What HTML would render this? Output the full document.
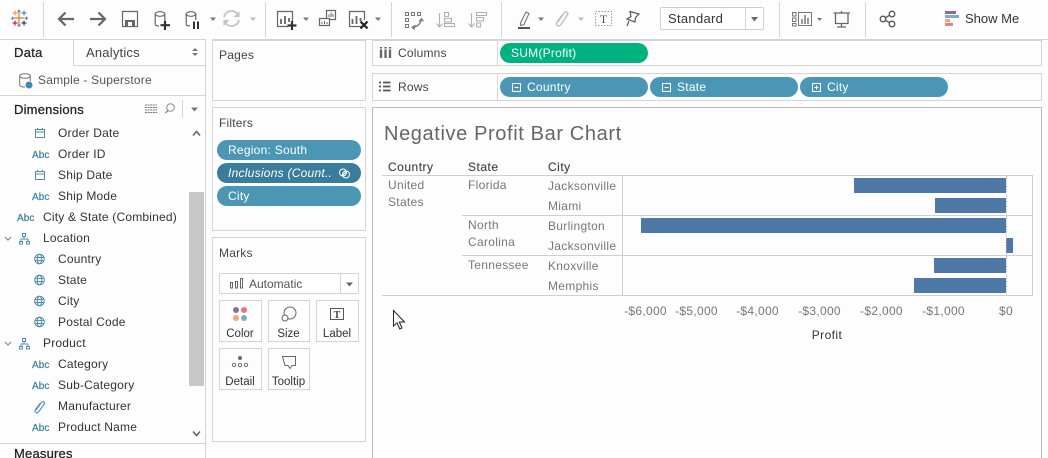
<!DOCTYPE html>
<html><head><meta charset="utf-8">
<style>
html,body{margin:0;padding:0;background:#fdfdfd;width:1048px;height:458px;overflow:hidden}
svg{display:block;font-family:"Liberation Sans",sans-serif;font-size:12px}
.l{fill:#333;letter-spacing:.2px}
.g{fill:#777;letter-spacing:.3px}
.h{fill:#444;letter-spacing:.5px;stroke:#444;stroke-width:.15px}
.w{fill:#fff;letter-spacing:.25px;font-size:12px}
.a{fill:#3b7f9b;font-size:10px;letter-spacing:.1px;stroke:#3b7f9b;stroke-width:.2px}
.i{fill:none;stroke:#666;stroke-width:1.2}
.b{fill:none;stroke:#d4d4d4;stroke-width:1}
.c{fill:none;stroke:#4f8fab;stroke-width:1}
.s{fill:none;stroke:#aaa;stroke-width:1.2}
.ar{fill:#777}
</style></head><body>
<svg width="1048" height="458" viewBox="0 0 1048 458" xmlns="http://www.w3.org/2000/svg">
<rect width="1048" height="458" fill="#fdfdfd"/>

<!-- toolbar separators -->
<g stroke="#d4d4d4" stroke-width="1">
<path d="M43.5 2V37M265.5 2V37M391.5 2V37M501.5 2V37M779.5 2V37M865.5 2V37"/>
<path d="M0 39.5H206M212 39.5H1048"/>
</g>

<!-- logo -->
<g fill="none" stroke-width="1.2">
<path d="M19 12V24M13.5 18H24.5" stroke="#e8762c"/>
<path d="M15 10.500V15.500M12.500 13H17.500" stroke="#e8a33d"/>
<path d="M24 10.500V15.500M21.500 13H26.500" stroke="#5b879b"/>
<path d="M15 20.500V25.500M12.500 23H17.500" stroke="#c72035"/>
<path d="M24 20.500V25.500M21.500 23H26.500" stroke="#1f447a"/>
<path d="M19 9.500V13M17.300 11.200H20.700" stroke="#5b879b"/>
<path d="M19 23.500V27M17.300 25.200H20.700" stroke="#7c6fa5"/>
<path d="M12.500 16.500V20M10.800 18.200H14.200" stroke="#5b9bb5"/>
<path d="M26.500 16.500V20M24.800 18.200H28.200" stroke="#5b879b"/>
</g>

<!-- back / forward -->
<path d="M59 19H74M65.500 12.500L59 19L65.500 25.500" fill="none" stroke="#666" stroke-width="2.200"/>
<path d="M90 19H105M98.500 12.500L105 19L98.500 25.500" fill="none" stroke="#666" stroke-width="2.200"/>
<!-- save -->
<path d="M122.500 11.500H137.500V26.500H122.500Z" class="i"/>
<rect x="125" y="20" width="10" height="6" fill="#666"/><rect x="128" y="22" width="4" height="4" fill="#fdfdfd"/>
<!-- new data source -->
<ellipse cx="160" cy="14" rx="4.800" ry="2.300" class="i"/>
<path d="M155.200 14V24C155.200 25.500 157 26 159 26M164.800 14V20" class="i"/>
<path d="M165 20.500V30M160.500 25.200H170" stroke="#333" stroke-width="2.200" fill="none"/>
<!-- pause -->
<ellipse cx="191" cy="14" rx="4.800" ry="2.300" class="i"/>
<path d="M186.200 14V24C186.200 25.500 188 26 190 26M195.800 14V20" class="i"/>
<path d="M194 21.500V29M198 21.500V29" stroke="#333" stroke-width="2" fill="none"/>
<path d="M210 17.500H216L213 21Z" class="ar"/>
<!-- refresh -->
<path d="M224 17C225 13 228 11 231.500 11C234 11 236 12 237.500 14M239 20C238 24 235 26 231.500 26C229 26 227 25 225.500 23" fill="none" stroke="#c4c4c4" stroke-width="1.800"/>
<path d="M239.500 11V17H233.500ZM223.500 26V20H229.500Z" fill="#c4c4c4"/>
<path d="M250 17.500H256L253 21Z" fill="#bbb"/>
<!-- new worksheet -->
<path d="M288 26.500H277.500V11.500H292.500V21" class="i"/>
<path d="M281 19V24M285 16V24M289 18V22" stroke="#666" stroke-width="1.800" fill="none"/>
<path d="M292 21V30M287.500 25.500H296.500" stroke="#333" stroke-width="2.200" fill="none"/>
<path d="M303 17.500H309L306 21Z" class="ar"/>
<!-- duplicate -->
<path d="M326.500 10.500H335.500V19.500H326.500Z" class="i"/>
<path d="M319.500 18.500H329.500V25.500H319.500Z" class="i" style="fill:#fdfdfd"/>
<path d="M329 17V14.500M331 17V12.500M333 17V14M322 24V22M324.500 24V21M327 24V22" stroke="#666" stroke-width="1" fill="none"/>
<!-- clear -->
<path d="M362 26.500H349.500V11.500H364.500V20" class="i"/>
<path d="M352.500 19V24M356.500 16V24M360.500 18V21" stroke="#666" stroke-width="1.800" fill="none"/>
<path d="M360.500 21.500L367.500 28.500M367.500 21.500L360.500 28.500" stroke="#222" stroke-width="2.200" fill="none"/>
<path d="M375 17.500H381L378 21Z" class="ar"/>
<!-- swap -->
<g stroke="#777" fill="none" stroke-width="1">
<path d="M405.500 12.500h3v3h-3zM411.500 12.500h3v3h-3zM417.500 12.500h3v3h-3zM405.500 18.500h3v3h-3zM405.500 24.500h3v3h-3z"/>
<path d="M421.500 19C421 23 418 26.500 413 27.500" stroke-width="1.300"/>
<path d="M419 21.500L421.500 18.500L423.500 21.500M415.500 25L412 27.500L415 29.500" stroke-width="1.100"/>
</g>
<!-- sort asc/desc -->
<g stroke="#b0b0b0" fill="none" stroke-width="1.100">
<path d="M439.500 13V27M436.500 23.500L439.500 27L442.500 23.500"/>
<path d="M444.500 12.500h4v4h-4zM444.500 18.500h7v3.500h-7zM444.500 23.500h10v3h-10z"/>
<path d="M471.500 13V27M468.500 23.500L471.500 27L474.500 23.500"/>
<path d="M476.500 12.500h10v3h-10zM476.500 17.500h7v3.500h-7zM476.500 23h4v4h-4z"/>
</g>
<!-- highlight -->
<path d="M520.500 23L526 12L529 13.500L524 24.500L520.500 25.500Z" fill="none" stroke="#777" stroke-width="1.100"/>
<rect x="518" y="27" width="12" height="2" fill="#555"/>
<path d="M538 17.500H544L541 21Z" class="ar"/>
<!-- clip -->
<path d="M558 22L564 13C566 10.500 569 12.500 567.500 15L560.500 25C558.500 27.500 555 25 557 22L562.500 14.500" fill="none" stroke="#bdbdbd" stroke-width="1.300"/>
<path d="M578 17.500H584L581 21Z" fill="#bbb"/>
<!-- T -->
<rect x="595.500" y="11.500" width="16" height="14" fill="none" stroke="#999" stroke-dasharray="1.500 1.500"/>
<text x="603.500" y="23" text-anchor="middle" font-family="Liberation Serif" font-size="12" fill="#555">T</text>
<!-- pin -->
<path d="M630 11.500L639 14L635.500 17.500L635 22L627 19L631 16.500ZM629 21L627 26" fill="none" stroke="#555" stroke-width="1.200"/>

<!-- Standard -->
<rect x="660.500" y="7.500" width="103" height="22" rx="1.500" fill="#fff" stroke="#d0d0d0"/>
<path d="M745.500 8V29" stroke="#d4d4d4"/>
<path d="M751 17H758L754.500 21.500Z" fill="#666"/>
<text x="668" y="23" font-size="13" fill="#333" letter-spacing=".3">Standard</text>

<!-- fit/show -->
<g fill="none" stroke="#777" stroke-width="1">
<path d="M792.500 12.500h3.500v3.500h-3.500zM792.500 18h3.500v3.500h-3.500zM792.500 23.500h3.500v2.500h-3.500z"/>
<path d="M798.500 12.500H811.500V25.500H798.500Z"/>
<path d="M802 24V19M805 24V15M808 24V18" stroke-width="1.500"/>
</g>
<path d="M817 18H822L819.500 21Z" class="ar"/>
<!-- presentation -->
<path d="M833.500 13H850M835.500 13V23.500H848V13M841.500 23.500V27M837 27H846M841.500 11V13" fill="none" stroke="#666" stroke-width="1.300"/>
<!-- share -->
<g fill="none" stroke="#555" stroke-width="1.300">
<circle cx="892" cy="14" r="2.800"/><circle cx="883" cy="19" r="2.800"/><circle cx="892" cy="24" r="2.800"/>
<path d="M885.500 17.700L889.500 15.300M885.500 20.300L889.500 22.700"/>
</g>
<!-- Show me -->
<rect x="945" y="11" width="11" height="3" fill="#8a6d9b"/>
<rect x="945" y="15" width="14" height="3" fill="#7eaccd"/>
<rect x="945" y="19" width="5" height="3" fill="#f0a675"/>
<rect x="945" y="23" width="8" height="3" fill="#f07c86"/>
<text x="965" y="23" font-size="13" fill="#333">Show Me</text>

<!-- left pane -->
<path d="M205.500 40V458" stroke="#d4d4d4"/>
<path d="M73.500 40V65.500H205" class="b"/>
<text x="14" y="57" font-size="13" fill="#222" stroke="#222" stroke-width=".25" letter-spacing=".3">Data</text>
<text x="86" y="57" font-size="13" fill="#444" letter-spacing=".2">Analytics</text>
<path d="M192 51L195 48L198 51ZM192 53L195 56L198 53Z" fill="#777"/>
<ellipse cx="25" cy="76" rx="5.300" ry="2.300" fill="none" stroke="#777"/>
<path d="M19.700 76V85C19.700 86.500 22 87 25 87M30.300 76V81" fill="none" stroke="#777"/>
<circle cx="29" cy="85" r="3.500" fill="#3d8bb0"/>
<text x="38" y="84" class="l" style="fill:#555">Sample - Superstore</text>
<path d="M0 95.500H205" class="b"/>
<text x="14" y="114" font-size="13" fill="#222" stroke="#222" stroke-width=".25" letter-spacing=".2">Dimensions</text>
<path d="M145 105H157M145 107.500H157M145 110H157M145 112.500H157" stroke="#777" stroke-dasharray="2 .6"/>
<circle cx="170.500" cy="107.500" r="3.800" fill="none" stroke="#888"/><path d="M168 110.500L165.500 113" stroke="#888" stroke-width="1.300"/>
<path d="M182.500 100V118" stroke="#d4d4d4"/>
<path d="M191 107.500H198L194.500 111.500Z" fill="#777"/>
<!-- scrollbar -->
<rect x="189" y="192" width="15" height="194" fill="#c8c8c8"/>
<path d="M193 135.500L196.500 131.500L200 135.500" fill="none" stroke="#666" stroke-width="1.600"/>
<path d="M193 431.500L196.500 435.500L200 431.500" fill="none" stroke="#666" stroke-width="1.600"/>

<!-- list -->
<g class="l">
<text x="58" y="137">Order Date</text>
<text x="58" y="158">Order ID</text>
<text x="58" y="179">Ship Date</text>
<text x="58" y="200">Ship Mode</text>
<text x="43" y="221">City &amp; State (Combined)</text>
<text x="43" y="242">Location</text>
<text x="58" y="263">Country</text>
<text x="58" y="284">State</text>
<text x="58" y="305">City</text>
<text x="58" y="326">Postal Code</text>
<text x="43" y="347">Product</text>
<text x="58" y="368">Category</text>
<text x="58" y="389">Sub-Category</text>
<text x="58" y="410">Manufacturer</text>
<text x="58" y="431">Product Name</text>
</g>
<g class="a">
<text x="32" y="158">Abc</text><text x="32" y="200">Abc</text><text x="17" y="221">Abc</text>
<text x="32" y="368">Abc</text><text x="32" y="389">Abc</text><text x="32" y="431">Abc</text>
</g>
<!-- date icons -->
<g class="c">
<path d="M35.500 129.500H44.500V137.500H35.500ZM35.500 132H44.500M37.500 128V130M42.500 128V130"/>
<path d="M35.500 171.500H44.500V179.500H35.500ZM35.500 174H44.500M37.500 170V172M42.500 170V172"/>
</g>
<!-- globes -->
<g class="c">
<circle cx="39.500" cy="259" r="4.800"/><ellipse cx="39.500" cy="259" rx="2.200" ry="4.800"/><path d="M34.700 257.500H44.300M34.700 260.500H44.300"/>
<circle cx="39.500" cy="280" r="4.800"/><ellipse cx="39.500" cy="280" rx="2.200" ry="4.800"/><path d="M34.700 278.500H44.300M34.700 281.500H44.300"/>
<circle cx="39.500" cy="301" r="4.800"/><ellipse cx="39.500" cy="301" rx="2.200" ry="4.800"/><path d="M34.700 299.500H44.300M34.700 302.500H44.300"/>
<circle cx="39.500" cy="322" r="4.800"/><ellipse cx="39.500" cy="322" rx="2.200" ry="4.800"/><path d="M34.700 320.500H44.300M34.700 323.500H44.300"/>
</g>
<!-- hierarchy -->
<g class="c">
<path d="M22.500 233.500h3v3h-3zM19.500 241.500h3v2.500h-3zM26.500 241.500h3v2.500h-3zM24 236.500V239M21 241.500V239H28V241.500"/>
<path d="M22.500 338.500h3v3h-3zM19.500 346.500h3v2.500h-3zM26.500 346.500h3v2.500h-3zM24 341.500V344M21 346.500V344H28V346.500"/>
</g>
<path d="M5 237L8 240L11 237M5 342L8 345L11 342" fill="none" stroke="#888" stroke-width="1.200"/>
<!-- clip -->
<path d="M36 410L41.500 402.500C43.500 400.500 45.500 402.500 44 404.500L38.500 412C36.500 414 34 412 35.500 409.500L40 403.500" fill="none" stroke="#4f8fab" stroke-width="1.100"/>
<path d="M0 443.500H205" class="b"/>
<text x="14" y="458" font-size="13" fill="#222" stroke="#222" stroke-width=".25" letter-spacing=".2">Measures</text>

<!-- middle cards -->
<rect x="212.500" y="40.500" width="153" height="60" class="b"/>
<rect x="212.500" y="107.500" width="153" height="123" class="b"/>
<rect x="212.500" y="237.500" width="153" height="204" class="b"/>
<text x="219" y="59" class="l" style="fill:#444">Pages</text>
<text x="219" y="127" class="l" style="fill:#444">Filters</text>
<text x="219" y="257" class="l" style="fill:#444">Marks</text>

<rect x="217" y="140" width="144" height="20" rx="10" fill="#4b96b4"/>
<rect x="217" y="163" width="144" height="20" rx="10" fill="#3a7c9b"/>
<rect x="217" y="186" width="144" height="20" rx="10" fill="#4b96b4"/>
<text x="228" y="154" class="w">Region: South</text>
<text x="228" y="177" class="w" font-style="italic">Inclusions (Count..</text>
<g fill="none" stroke="#fff" stroke-width="1"><circle cx="343" cy="172.500" r="3.500"/><circle cx="346" cy="174.500" r="3.500"/><path d="M342 176L347 171"/></g>
<text x="228" y="200" class="w">City</text>

<!-- marks -->
<rect x="219.500" y="273.500" width="139" height="20" rx="1" fill="#fff" stroke="#d4d4d4"/>
<path d="M340.500 274V293" stroke="#d4d4d4"/>
<path d="M346 282.500H353L349.500 286.500Z" fill="#666"/>
<path d="M230.500 282.500h2v5.500h-2zM235.500 281.500h2v6.500h-2zM240.500 278.500h2v9.500h-2z" fill="none" stroke="#666"/>
<text x="249" y="288" fill="#555">Automatic</text>
<g fill="#fdfdfd" stroke="#d4d4d4">
<rect x="219.500" y="300.500" width="42" height="41"/>
<rect x="268.500" y="300.500" width="41" height="41"/>
<rect x="316.500" y="300.500" width="42" height="41"/>
<rect x="219.500" y="348.500" width="42" height="41"/>
<rect x="268.500" y="348.500" width="41" height="41"/>
</g>
<circle cx="236" cy="310" r="3" fill="#8a6d9b"/><circle cx="244" cy="310" r="3" fill="#f0707c"/>
<circle cx="236" cy="318" r="3" fill="#f0a675"/><circle cx="244" cy="318" r="3" fill="#7eaccd"/>
<circle cx="290" cy="313" r="6" fill="none" stroke="#666"/>
<circle cx="285" cy="318" r="3" fill="#fdfdfd" stroke="#666"/>
<rect x="330.500" y="308.500" width="13" height="11" fill="none" stroke="#555"/>
<text x="337" y="318" text-anchor="middle" font-family="Liberation Serif" font-size="10" fill="#444" font-weight="bold">T</text>
<circle cx="240" cy="358" r="2" fill="#666"/>
<circle cx="234" cy="365" r="1.700" fill="none" stroke="#666" stroke-width=".9"/><circle cx="240" cy="365" r="1.700" fill="none" stroke="#666" stroke-width=".9"/><circle cx="246" cy="365" r="1.700" fill="none" stroke="#666" stroke-width=".9"/>
<path d="M282.500 356.500H295.500V365.500H292L290 368.500L288 365.500H285Z" fill="none" stroke="#666"/>
<g fill="#333" text-anchor="middle" font-size="11.500">
<text x="240" y="337">Color</text><text x="288.500" y="337">Size</text><text x="337" y="337">Label</text>
<text x="240" y="385">Detail</text><text x="288.500" y="385">Tooltip</text>
</g>

<!-- shelves -->
<rect x="372.500" y="40.500" width="669" height="25" class="b"/>
<rect x="372.500" y="73.500" width="669" height="27" class="b"/>
<path d="M497.500 41V65M497.500 74V100" stroke="#d4d4d4"/>
<path d="M381 47V58M385.500 47V58M390 47V58" stroke="#666" stroke-width="2.300" stroke-dasharray="1.500 1 8.500"/>
<path d="M379 82.500H381M383 82.500H390.500M379 86.500H381M383 86.500H390.500M379 90.500H381M383 90.500H390.500" stroke="#555" stroke-width="1.800"/>
<text x="398" y="57" class="l" style="fill:#444">Columns</text>
<text x="398" y="91" class="l" style="fill:#444">Rows</text>
<rect x="500" y="43" width="148" height="20" rx="10" fill="#00b27f"/>
<text x="511" y="57" class="w">SUM(Profit)</text>
<rect x="500" y="77" width="148" height="20" rx="10" fill="#4b96b4"/>
<rect x="650" y="77" width="148" height="20" rx="10" fill="#4b96b4"/>
<rect x="800" y="77" width="148" height="20" rx="10" fill="#4b96b4"/>
<g fill="none" stroke="#fff">
<path d="M512.500 83.500h8v8h-8zM514.500 87.500h4"/>
<path d="M662.500 83.500h8v8h-8zM664.500 87.500h4"/>
<path d="M812.500 83.500h8v8h-8zM814.500 87.500h4M816.500 85.500v4"/>
</g>
<text x="527" y="91" class="w">Country</text>
<text x="677" y="91" class="w">State</text>
<text x="827" y="91" class="w">City</text>

<!-- view -->
<path d="M372.500 458V107.500H1041.500V458" fill="none" stroke="#bbb"/>
<text x="384" y="140" font-size="20" fill="#666" letter-spacing=".62">Negative Profit Bar Chart</text>
<g class="h">
<text x="388" y="171">Country</text><text x="468" y="171">State</text><text x="548" y="171">City</text>
</g>
<g stroke="#d0d0d0" fill="none">
<path d="M382 175.500H1032.500V295.500H382"/>
<path d="M622.500 175V295M462 215.500H1032M462 255.500H1032"/>
</g>
<g class="g">
<text x="388" y="189">United</text><text x="388" y="206">States</text>
<text x="468" y="189">Florida</text><text x="468" y="229">North</text><text x="468" y="246">Carolina</text><text x="468" y="269">Tennessee</text>
<text x="548" y="190">Jacksonville</text><text x="548" y="210">Miami</text><text x="548" y="230">Burlington</text>
<text x="548" y="250">Jacksonville</text><text x="548" y="270">Knoxville</text><text x="548" y="290">Memphis</text>
</g>
<g fill="#4e79a7">
<rect x="854" y="178" width="152" height="15"/>
<rect x="935" y="198" width="71" height="15"/>
<rect x="641" y="218" width="365" height="15"/>
<rect x="1006" y="238" width="7" height="15"/>
<rect x="934" y="258" width="72" height="15"/>
<rect x="914" y="278" width="92" height="15"/>
</g>
<path d="M1006.500 176V295" stroke="#aab" stroke-dasharray="1 1.500" fill="none"/>
<g class="g" text-anchor="middle">
<text x="645.500" y="315">-$6,000</text><text x="696.500" y="315">-$5,000</text><text x="757.500" y="315">-$4,000</text>
<text x="819.500" y="315">-$3,000</text><text x="881.500" y="315">-$2,000</text><text x="943.500" y="315">-$1,000</text>
<text x="1006" y="315">$0</text>
</g>
<text x="827" y="339" text-anchor="middle" fill="#333" letter-spacing=".4">Profit</text>
<!-- cursor -->
<path d="M393.500 310.500V326L397 322.800L399.800 329L402 328L399.300 322H404.500Z" fill="#fff" stroke="#222" stroke-width="1"/>
</svg>
</body></html>
